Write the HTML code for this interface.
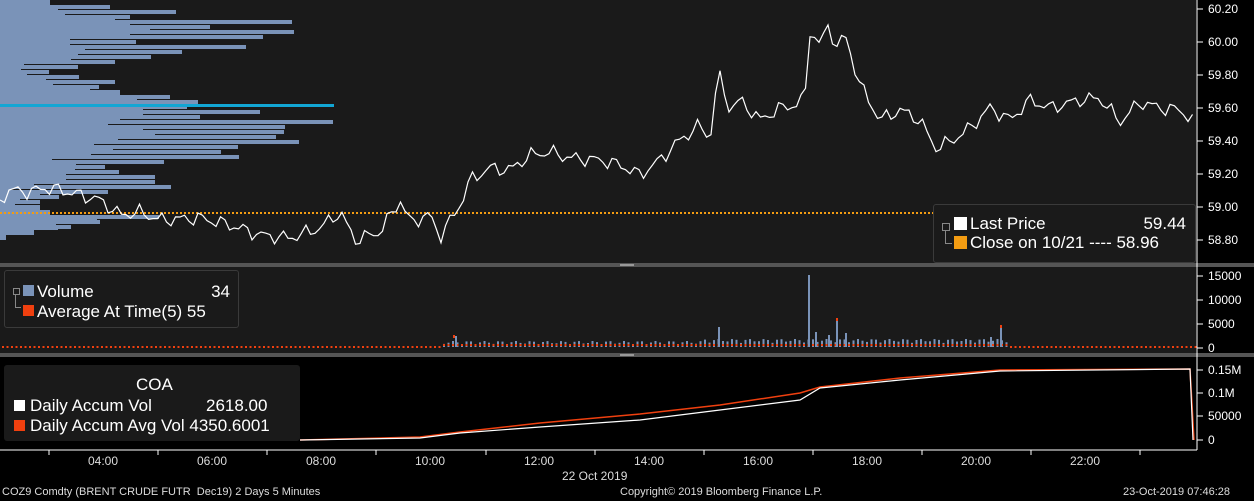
<!DOCTYPE html><html><head><style>
body{margin:0;width:1254px;height:501px;background:#000;overflow:hidden;font-family:"Liberation Sans",sans-serif;color:#fff;position:relative}
.a{position:absolute}
.lg{position:absolute;background:#1a1a1a;border:1px solid #3a3a3a;border-radius:3px;font-size:17px;line-height:20px}
.yl{position:absolute;left:1208px;font-size:12px;color:#fff}
.xl{position:absolute;top:454px;font-size:12px;color:#ddd}
</style></head><body>
<svg class="a" style="left:0;top:0" width="1254" height="501">
<rect x="0" y="0" width="1196" height="263" fill="#1a1a1a"/>
<rect x="0" y="263" width="1254" height="4" fill="#555"/>
<rect x="0" y="267" width="1196" height="86" fill="#1a1a1a"/>
<rect x="0" y="353" width="1254" height="4" fill="#555"/>
<rect x="0" y="357" width="1196" height="93" fill="#000"/>
<rect x="620" y="264" width="14" height="2" fill="#999"/><rect x="620" y="354" width="14" height="2" fill="#999"/>
<g fill="#7a93b8" id="vp"></g>
<rect x="0" y="104" width="334" height="3" fill="#12a6d4"/>
<line x1="0" y1="213" x2="1196" y2="213" stroke="#f39c12" stroke-width="2" stroke-dasharray="2,2"/>
<polyline id="pl" fill="none" stroke="#fff" stroke-width="1.2" points=""/>
<line x1="1197" y1="0" x2="1197" y2="450" stroke="#fff"/>
<line x1="0" y1="450" x2="1197" y2="450" stroke="#fff"/>
<g id="vb"></g>
<polyline fill="none" stroke="#f0400f" stroke-width="1.5" points="300,440 420,437 460,432 540,423 640,414 720,405 800,393 820,387 900,378 1000,370 1190,369 1194,440"/>
<polyline fill="none" stroke="#fff" stroke-width="1.2" points="300,440 420,438 460,433 540,427 640,420 720,410 800,400 820,388 900,380 1000,371 1190,369 1193,440"/>
<g stroke="#fff"><line x1="49" y1="450" x2="49" y2="455"/><line x1="158" y1="450" x2="158" y2="455"/><line x1="267" y1="450" x2="267" y2="455"/><line x1="376" y1="450" x2="376" y2="455"/><line x1="486" y1="450" x2="486" y2="455"/><line x1="595" y1="450" x2="595" y2="455"/><line x1="704" y1="450" x2="704" y2="455"/><line x1="813" y1="450" x2="813" y2="455"/><line x1="922" y1="450" x2="922" y2="455"/><line x1="1031" y1="450" x2="1031" y2="455"/><line x1="1140" y1="450" x2="1140" y2="455"/></g>
<g stroke="#fff">
<line x1="1197" y1="9" x2="1203" y2="9"/><line x1="1197" y1="42" x2="1203" y2="42"/><line x1="1197" y1="75" x2="1203" y2="75"/><line x1="1197" y1="108" x2="1203" y2="108"/><line x1="1197" y1="141" x2="1203" y2="141"/><line x1="1197" y1="174" x2="1203" y2="174"/><line x1="1197" y1="207" x2="1203" y2="207"/><line x1="1197" y1="240" x2="1203" y2="240"/>
<line x1="1197" y1="276" x2="1203" y2="276"/><line x1="1197" y1="300" x2="1203" y2="300"/><line x1="1197" y1="324" x2="1203" y2="324"/><line x1="1197" y1="348" x2="1203" y2="348"/>
<line x1="1197" y1="370" x2="1203" y2="370"/><line x1="1197" y1="393" x2="1203" y2="393"/><line x1="1197" y1="416" x2="1203" y2="416"/><line x1="1197" y1="440" x2="1203" y2="440"/>
</g>
</svg>
<script>
var w=[50,110,176,130,292,210,294,263,136,246,182,151,115,78,49,79,115,99,65,170,198,187,260,200,333,285,284,276,299,238,221,239,164,105,119,155,155,171,108,59,40,33,38,159,100,71,26,6];
var e=[50,58,65,115,130,150,130,70,70,85,78,71,24,21,27,46,53,90,120,137,132,143,143,120,108,143,155,118,94,113,91,52,76,75,66,66,34,10,40,20,15,40,50,97,56,58,34,6];
var h='';for(var i=0;i<w.length;i++){var y=i*5;var m=Math.max(w[i],e[i]);h+='<rect x="0" y="'+y+'" width="'+m+'" height="4"/><rect x="0" y="'+y+'" width="'+e[i]+'" height="5"/>';}
document.getElementById('vp').innerHTML=h;
var P=[[0,200],[10,190],[30,192],[45,188],[60,190],[80,195],[100,200],[120,215],[140,212],[160,220],[200,218],[230,225],[260,235],[290,238],[320,228],[340,212],[355,240],[380,232],[400,200],[410,222],[430,215],[440,237],[460,205],[470,180],[490,168],[510,170],[530,155],[550,152],[570,158],[600,160],[620,165],[640,175],[660,160],[680,140],[700,125],[710,140],[718,72],[730,110],[740,100],[760,120],[780,108],[795,105],[805,98],[810,30],[820,45],[830,22],[835,50],[845,35],[860,85],[880,120],[900,110],[920,120],[935,148],[950,142],[970,128],[990,108],[1010,120],[1030,100],[1050,108],[1080,100],[1100,98],[1120,122],[1140,102],[1160,108],[1180,110],[1195,122]];
var pts=[],k=0;for(var x=0;x<=1195;x+=4.5){while(k<P.length-2&&P[k+1][0]<x)k++;var a=P[k],b=P[k+1];var t=(x-a[0])/(b[0]-a[0]);var y=a[1]+(b[1]-a[1])*t+5*Math.sin(x*1.7)+3*Math.sin(x*0.53);pts.push(x.toFixed(1)+','+y.toFixed(1));}
document.getElementById('pl').setAttribute('points',pts.join(' '));
var v='';for(var x=2;x<1195;x+=4.5){var s=(x>440&&x<1010)?2+4*Math.abs(Math.sin(x*0.9)):1;if(x>700&&x<1010)s+=2;v+='<rect x="'+x.toFixed(1)+'" y="'+(347-s).toFixed(1)+'" width="2" height="'+s.toFixed(1)+'" fill="#7a93b8"/><rect x="'+x.toFixed(1)+'" y="'+(346-(x>440&&x<1010?2:0))+'" width="2" height="2" fill="#f0400f"/>';}
v+='<g fill="#7a93b8"><rect x="808" y="275" width="2" height="72"/><rect x="836" y="318" width="2" height="29"/><rect x="718" y="327" width="2" height="20"/><rect x="1000" y="325" width="2" height="22"/><rect x="455" y="336" width="2" height="11"/><rect x="815" y="332" width="2" height="15"/><rect x="828" y="335" width="2" height="12"/><rect x="845" y="333" width="2" height="14"/><rect x="990" y="337" width="2" height="10"/></g><g fill="#f0400f"><rect x="836" y="318" width="2" height="3"/><rect x="1000" y="325" width="2" height="3"/><rect x="453" y="335" width="2" height="3"/></g>';
document.getElementById('vb').innerHTML=v;
</script>
<div class="yl" style="top:2px">60.20</div><div class="yl" style="top:35px">60.00</div><div class="yl" style="top:68px">59.80</div><div class="yl" style="top:101px">59.60</div><div class="yl" style="top:134px">59.40</div><div class="yl" style="top:167px">59.20</div><div class="yl" style="top:200px">59.00</div><div class="yl" style="top:233px">58.80</div>
<div class="yl" style="top:269px">15000</div><div class="yl" style="top:293px">10000</div><div class="yl" style="top:317px">5000</div><div class="yl" style="top:341px">0</div>
<div class="yl" style="top:363px">0.15M</div><div class="yl" style="top:386px">0.1M</div><div class="yl" style="top:409px">50000</div><div class="yl" style="top:433px">0</div>
<div class="xl" style="left:88px">04:00</div><div class="xl" style="left:197px">06:00</div><div class="xl" style="left:306px">08:00</div><div class="xl" style="left:415px">10:00</div><div class="xl" style="left:524px">12:00</div><div class="xl" style="left:634px">14:00</div><div class="xl" style="left:743px">16:00</div><div class="xl" style="left:852px">18:00</div><div class="xl" style="left:961px">20:00</div><div class="xl" style="left:1070px">22:00</div>
<div class="xl" style="left:562px;top:469px">22 Oct 2019</div>
<div class="a" style="left:2px;top:486px;font-size:11px;color:#ddd">COZ9 Comdty (BRENT CRUDE FUTR&nbsp; Dec19) 2 Days 5 Minutes</div>
<div class="a" style="left:620px;top:486px;font-size:11px;color:#ddd">Copyright© 2019 Bloomberg Finance L.P.</div>
<div class="a" style="left:1123px;top:486px;font-size:11px;color:#ddd">23-Oct-2019 07:46:28</div>
<div class="lg" style="left:933px;top:204px;width:261px;height:57px">
<div class="a" style="left:11px;top:24px;width:6px;height:14px;border-left:1px solid #888;border-bottom:1px solid #888"></div>
<div class="a" style="left:8px;top:18px;width:6px;height:6px;border:1px solid #888;background:#1a1a1a"></div>
<div class="a" style="left:20px;top:12px;width:13px;height:13px;background:#fff"></div><div class="a" style="left:36px;top:9px">Last Price</div><div class="a" style="right:9px;top:9px">59.44</div>
<div class="a" style="left:20px;top:31px;width:13px;height:13px;background:#f39c12"></div><div class="a" style="left:36px;top:28px">Close on 10/21 ---- 58.96</div>
</div>
<div class="lg" style="left:4px;top:270px;width:233px;height:56px">
<div class="a" style="left:10px;top:22px;width:5px;height:14px;border-left:1px solid #888;border-bottom:1px solid #888"></div>
<div class="a" style="left:8px;top:17px;width:5px;height:5px;border:1px solid #888;background:#1a1a1a"></div>
<div class="a" style="left:18px;top:14px;width:11px;height:11px;background:#7a93b8"></div><div class="a" style="left:32px;top:11px">Volume</div><div class="a" style="right:8px;top:11px">34</div>
<div class="a" style="left:18px;top:34px;width:11px;height:11px;background:#f0400f"></div><div class="a" style="left:32px;top:31px">Average At Time(5) 55</div>
</div>
<div class="lg" style="left:4px;top:365px;width:294px;height:74px;border-color:#1a1a1a">
<div class="a" style="left:131px;top:9px">COA</div>
<div class="a" style="left:9px;top:34px;width:11px;height:11px;background:#fff"></div><div class="a" style="left:25px;top:30px">Daily Accum Vol</div><div class="a" style="left:201px;top:30px">2618.00</div>
<div class="a" style="left:9px;top:54px;width:11px;height:11px;background:#f0400f"></div><div class="a" style="left:25px;top:50px">Daily Accum Avg Vol 4350.6001</div>
</div>
</body></html>
